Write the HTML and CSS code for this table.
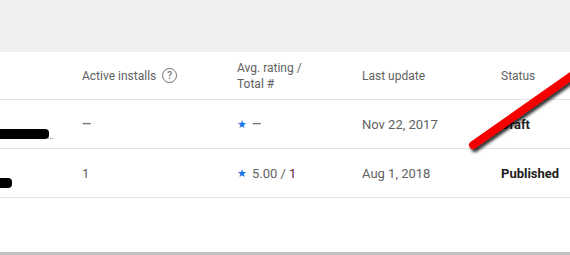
FILE: index.html
```html
<!DOCTYPE html>
<html>
<head>
<meta charset="utf-8">
<link rel="stylesheet" href="styles.css">
</head>
<body>
<div class="page">
  <div class="topbar"></div>
  <div class="table">
    <div class="row head">
      <div class="cell"></div>
      <div class="cell">Active installs <span class="help">?</span></div>
      <div class="cell two">Avg. rating /<br>Total #</div>
      <div class="cell">Last update</div>
      <div class="cell">Status</div>
    </div>
    <div class="row">
      <div class="cell name"><span class="redact long"></span><span class="ell">...</span></div>
      <div class="cell"><span class="dash">—</span></div>
      <div class="cell"><span class="star">★</span><span class="dash">—</span></div>
      <div class="cell">Nov 22, 2017</div>
      <div class="cell status">Draft</div>
    </div>
    <div class="row">
      <div class="cell name"><span class="redact short"></span></div>
      <div class="cell">1</div>
      <div class="cell"><span class="star">★</span>5.00 / <span class="total">1</span></div>
      <div class="cell">Aug 1, 2018</div>
      <div class="cell status">Published</div>
    </div>
  </div>
  <div class="filler"></div>
  <div class="edge"></div>
  <svg class="annot" width="570" height="255" viewBox="0 0 570 255">
    <defs>
      <filter id="sh" x="-20%" y="-20%" width="140%" height="140%">
        <feDropShadow dx="2" dy="3" stdDeviation="1.5" flood-color="#000" flood-opacity="0.8"/>
      </filter>
    </defs>
    <line x1="473" y1="145" x2="590" y2="63" stroke="#f40000" stroke-width="8" stroke-linecap="round" filter="url(#sh)"/>
  </svg>
</div>
</body>
</html>
```
FILE: styles.css
```css
html, body {
  margin: 0;
  padding: 0;
  background: #ffffff;
}
.page {
  position: relative;
  width: 570px;
  height: 255px;
  overflow: hidden;
  font-family: Roboto, "Liberation Sans", sans-serif;
}
.topbar {
  height: 52px;
  background: #f0f0f0;
}
.row {
  display: grid;
  grid-template-columns: 82px 155px 125px 139px 1fr;
  height: 49px;
  border-bottom: 1px solid #e3e3e3;
  box-sizing: border-box;
}
.row.head {
  height: 48px;
}
.cell {
  display: flex;
  align-items: center;
  font-size: 13px;
  color: #616161;
  white-space: nowrap;
}
.head .cell {
  font-size: 12px;
  color: #616161;
}
.head .two {
  line-height: 16px;
  padding-top: 1px;
}
.help {
  display: inline-flex;
  align-items: center;
  justify-content: center;
  width: 13px;
  height: 13px;
  margin-left: 6px;
  border: 1.3px solid #6f6f6f;
  border-radius: 50%;
  font-size: 10px;
  font-weight: 500;
  color: #6f6f6f;
}
.name {
  align-items: flex-start;
  padding-top: 29px;
  box-sizing: border-box;
}
.redact {
  display: block;
  height: 10px;
  background: #000;
  border-radius: 0 4px 4px 0;
}
.redact.long { width: 49px; }
.redact.short { width: 12px; }
.ell {
  font-size: 10px;
  line-height: 10px;
  color: #8a8a8a;
  margin-left: -2px;
  padding-top: 2px;
  letter-spacing: -0.5px;
}
.dash {
  font-size: 15px;
  font-weight: 500;
  color: #757575;
  display: inline-block;
  transform: scaleX(0.8);
  transform-origin: left center;
}
.star {
  color: #1a73e8;
  font-size: 11px;
  margin-right: 5px;
}
.total {
  color: #6d1b46;
  margin-left: 3px;
}
.status {
  font-weight: 700;
  color: #212121;
}
.filler {
  height: 54px;
}
.edge {
  height: 3px;
  background: #c2c2c2;
}
.annot {
  position: absolute;
  left: 0;
  top: 0;
}
```
